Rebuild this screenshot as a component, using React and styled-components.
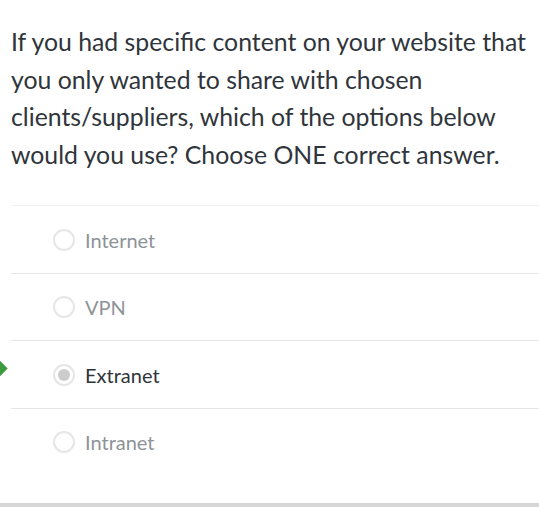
import styled, { createGlobalStyle } from "styled-components";

const Global = createGlobalStyle`
  body {
    margin: 0;
    background: #ffffff;
    font-family: Lato, "Open Sans", sans-serif;
  }
`;

const Page = styled.div`
  width: 539px;
  height: 507px;
  box-sizing: border-box;
  border-bottom: 4px solid #d6d6d6;
  position: relative;
  overflow: hidden;
`;

const Question = styled.p`
  margin: 0;
  padding: 23px 8px 0 11px;
  font-size: 24.8px;
  line-height: 37.5px;
  color: #2f353b;
`;

const Options = styled.div`
  margin: 32px 0 0 11px;
  display: flex;
  flex-direction: column;
`;

const Row = styled.label`
  display: flex;
  align-items: center;
  gap: 10px;
  height: 67.5px;
  box-sizing: border-box;
  padding: 1px 0 0 42px;
  border-top: 1px solid ${(p) => (p.$first ? "#f1f1f1" : "#e6e6e6")};
  font-size: 20px;
  color: ${(p) => (p.$selected ? "#2f353b" : "#8e9398")};
`;

const Radio = styled.span`
  width: 22px;
  height: 22px;
  box-sizing: border-box;
  border-radius: 50%;
  border: 2px solid #e6e6e6;
  display: flex;
  align-items: center;
  justify-content: center;

  &::after {
    content: "";
    width: 12px;
    height: 12px;
    border-radius: 50%;
    background: ${(p) => (p.$checked ? "#cccccc" : "transparent")};
  }
`;

const Marker = styled.span`
  position: absolute;
  left: -8px;
  top: 362px;
  width: 13px;
  height: 13px;
  background: #3c9b3c;
  transform: rotate(45deg);
`;

const options = ["Internet", "VPN", "Extranet", "Intranet"];

export default function App() {
  return (
    <Page>
      <Global />
      <Question>
        If you had specific content on your website that you only wanted to share with chosen
        clients/suppliers, which of the options below would you use? Choose ONE correct answer.
      </Question>
      <Options>
        {options.map((o, i) => (
          <Row key={o} $first={i === 0} $selected={o === "Extranet"}>
            <Radio $checked={o === "Extranet"} />
            {o}
          </Row>
        ))}
      </Options>
      <Marker />
    </Page>
  );
}
